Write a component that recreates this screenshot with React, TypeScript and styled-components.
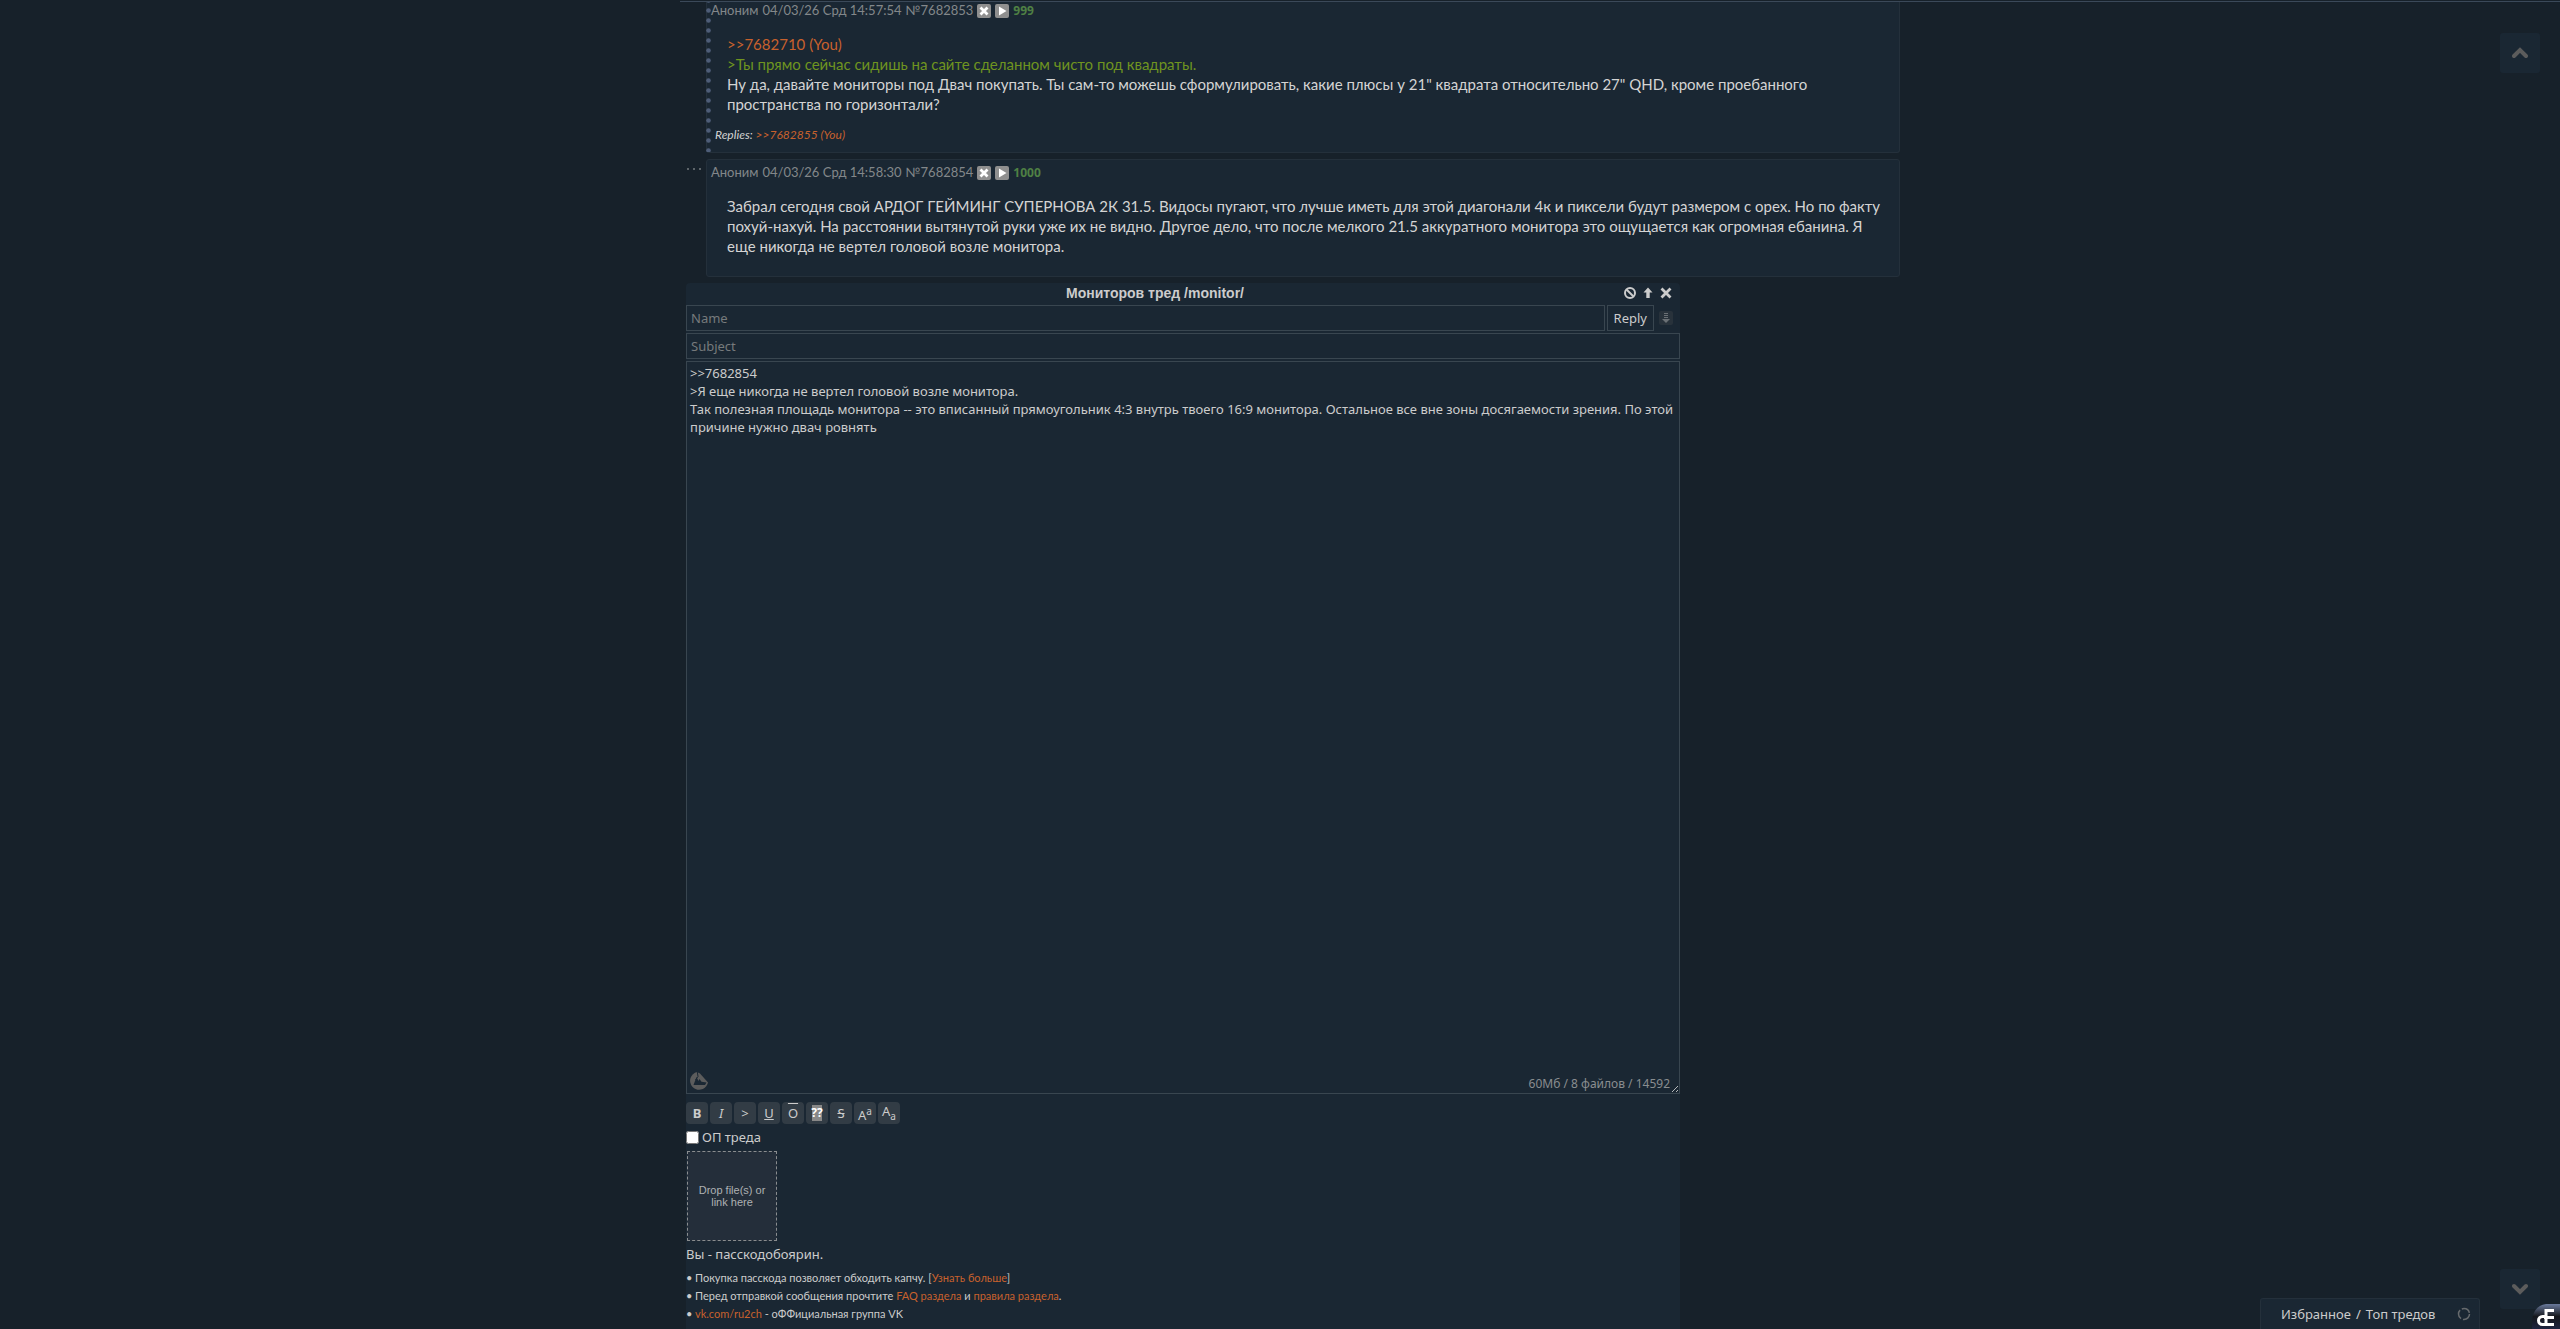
import React from 'react';
import styled, { createGlobalStyle, css } from 'styled-components';

const c = {
  page: '#17212a',
  panel: '#1a2733',
  edge: '#24303b',
  field: '#394650',
  line: '#3b4959',
  text: '#cccccc',
  post: '#d4d4d4',
  muted: '#83878a',
  link: '#c8612d',
  quote: '#6f9420',
  count: '#4f8044',
};
const postFont = 'Lato, "Noto Sans", sans-serif';
const formFont = '"Noto Sans", "Open Sans", sans-serif';
const arial = '"Liberation Sans", Arial, sans-serif';

const GlobalStyle = createGlobalStyle`
  *, *::before, *::after { box-sizing: border-box; }
  body { margin: 0; background: ${c.page}; color: ${c.text}; font-family: ${postFont}; overflow: hidden; }
  button, input, textarea { font: inherit; color: inherit; margin: 0; }
  button { cursor: pointer; }
`;

const Page = styled.main`
  display: flex;
  flex-direction: column;
  height: 100vh;
  margin-left: max(0px, calc(50% - 600px));
`;

const TopLine = styled.div`
  flex: none;
  height: 2px;
  border-bottom: 1px solid ${c.line};
`;

const Thread = styled.section`
  flex: none;
  display: flex;
  flex-direction: column;
  gap: 6px;
  max-width: 1220px;
`;

const PostRow = styled.div`
  display: grid;
  grid-template-columns: 26px minmax(0, 1fr);
`;

const Hide = styled.button`
  align-self: start;
  padding: 0 5px 0 7px;
  border: 0;
  background: none;
  display: flex;
  height: 20px;
  align-items: center;
`;

const Post = styled.article<{ $cut?: boolean }>`
  position: relative;
  padding: 4px 8px 7px 4px;
  background: ${c.panel};
  border: 1px solid ${c.edge};
  border-radius: 3px;
  ${(p) => p.$cut && css`
    border-top: 0;
    border-radius: 0 0 3px 3px;
    padding-top: 0;
  `}
`;

const MineMark = styled.svg`
  position: absolute;
  top: 0;
  left: -1px;
  width: 5px;
  height: 100%;
`;

const PostHead = styled.header`
  display: flex;
  align-items: center;
  gap: 4px;
  height: 17px;
  font-size: 13px;
  line-height: 17px;
  color: ${c.muted};
`;

const HeadButton = styled.button`
  display: flex;
  padding: 0;
  border: 0;
  background: none;
`;

const PostCount = styled.span`
  color: ${c.count};
  font: bold 12px/16px ${formFont};
`;

const Message = styled.p`
  margin: 15px 0 13px 16px;
  color: ${c.post};
  font-size: 15px;
  line-height: 20px;
`;

const Link = styled.a`
  color: ${c.link};
  text-decoration: none;
`;

const Quote = styled.span`
  color: ${c.quote};
`;

const Replies = styled.div`
  margin-left: 4px;
  padding-bottom: 2px;
  color: ${c.post};
  font-size: 12px;
  line-height: 16px;
  font-style: italic;
`;

const Form = styled.form`
  flex: 1 0 auto;
  display: flex;
  flex-direction: column;
  max-width: 994px;
  width: 100%;
  margin: 6px 0 0 6px;
  background: ${c.panel};
  border-radius: 4px 4px 0 0;
  font: 13px/18px ${formFont};
`;

const TitleBar = styled.div`
  display: grid;
  grid-template-columns: 1fr 56px;
  align-items: center;
  height: 22px;
`;

const Title = styled.h2`
  margin: 0;
  padding-bottom: 2px;
  text-align: center;
  font: bold 14px/16px ${arial};
`;

const WindowButtons = styled.div`
  display: flex;
  justify-content: flex-end;
  gap: 4px;
  padding: 0 7px 2px 0;
`;

const IconButton = styled.button`
  display: flex;
  padding: 0;
  border: 0;
  background: none;
`;

const Fields = styled.div`
  display: flex;
  flex-direction: column;
  gap: 2px;
`;

const FieldRow = styled.div`
  display: flex;
  align-items: center;
  gap: 2px;
  padding-right: 7px;
`;

const Field = styled.input`
  flex: 1;
  min-width: 0;
  width: 100%;
  min-height: 26px;
  padding: 0 4px;
  background: transparent;
  border: 1px solid ${c.field};
  border-radius: 0;
  outline: 0;
  &::placeholder { color: #767a7c; opacity: 1; }
`;

const Submit = styled.button`
  height: 26px;
  padding: 0 6px;
  background: transparent;
  border: 1px solid ${c.field};
  margin-right: 3px;
`;

const Editor = styled.div`
  position: relative;
  display: flex;
`;

const Comment = styled.textarea`
  width: 100%;
  height: 733px;
  padding: 2px 2px 2px 3px;
  background: transparent;
  border: 1px solid ${c.field};
  outline: 0;
  resize: none;
  overflow: hidden;
`;

const Drive = styled.button`
  position: absolute;
  left: 4px;
  bottom: 4px;
  display: flex;
  padding: 0;
  border: 0;
  background: none;
`;

const Limits = styled.span`
  position: absolute;
  right: 10px;
  bottom: 1px;
  font-size: 12px;
  color: #898d90;
`;

const Grip = styled.svg`
  position: absolute;
  right: 1px;
  bottom: 1px;
`;

const Toolbar = styled.div`
  display: flex;
  gap: 2px;
  padding-top: 8px;
`;

const Tool = styled.button`
  display: flex;
  align-items: center;
  justify-content: center;
  width: 22px;
  height: 22px;
  padding: 0;
  border: 0;
  border-radius: 4px;
  background: #323c45;
  line-height: 16px;
  sup, sub { font-size: 10px; }
`;

const Overline = styled.span`
  text-decoration: overline;
`;

const Spoiler = styled.span`
  background: #888;
  color: #fff;
  font-weight: bold;
  font-size: 12px;
  line-height: 16px;
  width: 10px;
  display: flex;
  justify-content: center;
`;

const OpLabel = styled.label`
  display: flex;
  align-items: center;
  gap: 3px;
  height: 26px;
  input { width: 13px; height: 13px; }
`;

const Drop = styled.button`
  width: 90px;
  height: 90px;
  margin: 1px 0 0 1px;
  padding: 0 8px;
  border: 1px dashed #8a8d8f;
  background: #242e3a;
  color: #aeb1b3;
  font: 11px/12px ${arial};
`;

const Passcode = styled.div`
  margin-top: 4px;
`;

const Rules = styled.ul`
  list-style: none;
  margin: 6px 0 0;
  padding: 0;
  font: 11px/18px ${postFont};
  li::before { content: '•'; display: inline-block; width: 9px; }
`;

const Scroll = styled.button<{ $at: 'top' | 'bottom' }>`
  position: fixed;
  right: 20px;
  ${(p) => (p.$at === 'top' ? 'top: 33px;' : 'bottom: 20px;')}
  width: 40px;
  height: 40px;
  display: flex;
  align-items: center;
  justify-content: center;
  padding: 0;
  border: 0;
  border-radius: 3px;
  background: ${c.panel};
`;

const Favorites = styled.aside`
  position: fixed;
  right: 80px;
  bottom: 0;
  display: flex;
  align-items: center;
  justify-content: space-between;
  width: 220px;
  height: 31px;
  padding: 0 8px 0 20px;
  background: ${c.panel};
  border: 1px solid ${c.edge};
  border-bottom: 0;
  border-radius: 3px 3px 0 0;
  font: 13px/18px ${formFont};
`;

const FavList = styled.span`
  display: flex;
  gap: 5px;
`;

const FavLink = styled.a`
  color: inherit;
  text-decoration: none;
`;

const Extension = styled.button`
  position: fixed;
  right: 0;
  bottom: 0;
  display: flex;
  padding: 0;
  border: 0;
  background: none;
`;

const HeadIcons = () => (
  <>
    <HeadButton type="button" aria-label="Hide">
      <svg width="14" height="14" viewBox="0 0 14 14">
        <rect width="14" height="14" rx="2" fill="#8f8f8f" />
        <path d="M3.500 3.500l7 7M10.500 3.500l-7 7" stroke="#fff" strokeWidth="2.800" />
      </svg>
    </HeadButton>
    <HeadButton type="button" aria-label="Reply">
      <svg width="14" height="14" viewBox="0 0 14 14">
        <rect width="14" height="14" rx="2" fill="#8f8f8f" />
        <path d="M4 2.500v9l7.500-4.500z" fill="#fff" />
      </svg>
    </HeadButton>
  </>
);

const tools: [string, React.ReactNode][] = [
  ['Bold', <b>B</b>],
  ['Italic', <i>I</i>],
  ['Quote', <span>&gt;</span>],
  ['Underline', <u>U</u>],
  ['Overline', <Overline>O</Overline>],
  ['Spoiler', <Spoiler>??</Spoiler>],
  ['Strike', <s>S</s>],
  ['Superscript', <span>A<sup>a</sup></span>],
  ['Subscript', <span>A<sub>a</sub></span>],
];

const draft = `>>7682854
>Я еще никогда не вертел головой возле монитора.
Так полезная площадь монитора -- это вписанный прямоугольник 4:3 внутрь твоего 16:9 монитора. Остальное все вне зоны досягаемости зрения. По этой причине нужно двач ровнять`;

export default function App() {
  return (
    <>
      <GlobalStyle />
      <Page>
        <TopLine />
        <Thread>
          <PostRow>
            <span />
            <Post $cut>
              <MineMark aria-hidden="true">
                <defs>
                  <pattern id="dots" width="5" height="10" y="6" patternUnits="userSpaceOnUse">
                    <circle cx="2.500" cy="2.500" r="2.300" fill="#4e5d78" />
                  </pattern>
                </defs>
                <rect width="5" height="100%" fill="url(#dots)" />
              </MineMark>
              <PostHead>
                <span>Аноним</span>
                <span>04/03/26 Срд 14:57:54</span>
                <span>№7682853</span>
                <HeadIcons />
                <PostCount>999</PostCount>
              </PostHead>
              <Message>
                <Link href="#7682710">&gt;&gt;7682710 (You)</Link>
                <br />
                <Quote>&gt;Ты прямо сейчас сидишь на сайте сделанном чисто под квадраты.</Quote>
                <br />
                Ну да, давайте мониторы под Двач покупать. Ты сам-то можешь сформулировать, какие плюсы у 21"
                квадрата относительно 27" QHD, кроме проебанного пространства по горизонтали?
              </Message>
              <Replies>
                Replies: <Link href="#7682855">&gt;&gt;7682855 (You)</Link>
              </Replies>
            </Post>
          </PostRow>
          <PostRow>
            <Hide type="button" aria-label="Post menu">
              <svg width="14" height="4" viewBox="0 0 14 4" fill="#5d6469">
                <rect x="0" y="1" width="2" height="2" />
                <rect x="6" y="1" width="2" height="2" />
                <rect x="12" y="1" width="2" height="2" />
              </svg>
            </Hide>
            <Post>
              <PostHead>
                <span>Аноним</span>
                <span>04/03/26 Срд 14:58:30</span>
                <span>№7682854</span>
                <HeadIcons />
                <PostCount>1000</PostCount>
              </PostHead>
              <Message>
                Забрал сегодня свой АРДОГ ГЕЙМИНГ СУПЕРНОВА 2К 31.5. Видосы пугают, что лучше иметь для этой
                диагонали 4к и пиксели будут размером с орех. Но по факту похуй-нахуй. На расстоянии вытянутой
                руки уже их не видно. Другое дело, что после мелкого 21.5 аккуратного монитора это ощущается как
                огромная ебанина. Я еще никогда не вертел головой возле монитора.
              </Message>
            </Post>
          </PostRow>
        </Thread>

        <Form onSubmit={(e) => e.preventDefault()}>
          <TitleBar>
            <Title>Мониторов тред /monitor/</Title>
            <WindowButtons>
              <IconButton type="button" aria-label="Clear">
                <svg width="14" height="14" viewBox="0 0 14 14" fill="none" stroke="#ccc" strokeWidth="2">
                  <circle cx="7" cy="7" r="5" />
                  <path d="M3.500 3.500l7 7" />
                </svg>
              </IconButton>
              <IconButton type="button" aria-label="Undock">
                <svg width="14" height="14" viewBox="0 0 14 14" fill="#ccc">
                  <path d="M7 1.500l4.500 5H8.700V12H5.300V6.500H2.500z" />
                </svg>
              </IconButton>
              <IconButton type="button" aria-label="Close">
                <svg width="14" height="14" viewBox="0 0 14 14" stroke="#ccc" strokeWidth="2.800">
                  <path d="M2.500 2.500l9 9M11.500 2.500l-9 9" />
                </svg>
              </IconButton>
            </WindowButtons>
          </TitleBar>
          <Fields>
            <FieldRow>
              <Field placeholder="Name" aria-label="Name" />
              <Submit type="submit">Reply</Submit>
              <IconButton type="button" aria-label="Sage">
                <svg width="14" height="14" viewBox="0 0 14 14">
                  <rect width="14" height="14" rx="2" fill="#28323b" />
                  <path d="M5 2.500h4M5 4.500h4M5 6.500h4" stroke="#6a7075" />
                  <path d="M3 8h8l-4 4z" fill="#6a7075" />
                </svg>
              </IconButton>
            </FieldRow>
            <Field placeholder="Subject" aria-label="Subject" />
            <Editor>
              <Comment aria-label="Comment" defaultValue={draft} spellCheck={false} />
              <Drive type="button" aria-label="Attach from drive">
                <svg width="18" height="18" viewBox="0 0 18 18">
                  <path d="M7 0A9 9 0 1 0 17.500 12L18 10.500 10 1.500z" fill="#5c5c5c" />
                  <path d="M6.500 5L3.500 13H15l1.500-2.500-5-.8L9.500 7 8.500 9z" fill={c.panel} />
                  <path d="M7.300 0L8 4.500 5.500 8" fill="none" stroke={c.panel} />
                </svg>
              </Drive>
              <Limits>60Мб / 8 файлов / 14592</Limits>
              <Grip width="8" height="8" viewBox="0 0 8 8" stroke="#b5b8ba" aria-hidden="true">
                <path d="M1 7l6-6M5 7l2-2" />
              </Grip>
            </Editor>
          </Fields>
          <Toolbar>
            {tools.map(([name, glyph]) => (
              <Tool key={name} type="button" title={name}>{glyph}</Tool>
            ))}
          </Toolbar>
          <OpLabel>
            <input type="checkbox" />
            ОП треда
          </OpLabel>
          <Drop type="button">Drop file(s) or link here</Drop>
          <Passcode>Вы - пасскодобоярин.</Passcode>
          <Rules>
            <li>Покупка пасскода позволяет обходить капчу. [<Link href="#market">Узнать больше</Link>]</li>
            <li>
              Перед отправкой сообщения прочтите <Link href="#faq">FAQ раздела</Link> и{' '}
              <Link href="#rules">правила раздела</Link>.
            </li>
            <li><Link href="#vk">vk.com/ru2ch</Link> - оФФициальная группа VK</li>
          </Rules>
        </Form>
      </Page>

      <Scroll $at="top" type="button" aria-label="Up">
        <svg width="16" height="12" viewBox="0 0 16 12" fill="none" stroke="#5c5c5c" strokeWidth="4" strokeLinecap="round">
          <path d="M2 9l6-6 6 6" />
        </svg>
      </Scroll>
      <Scroll $at="bottom" type="button" aria-label="Down">
        <svg width="16" height="12" viewBox="0 0 16 12" fill="none" stroke="#5c5c5c" strokeWidth="4" strokeLinecap="round">
          <path d="M2 3l6 6 6-6" />
        </svg>
      </Scroll>
      <Favorites>
        <FavList>
          <FavLink href="#favorites">Избранное</FavLink>
          <span>/</span>
          <FavLink href="#top">Топ тредов</FavLink>
        </FavList>
        <IconButton type="button" aria-label="Refresh">
          <svg width="14" height="14" viewBox="0 0 14 14" fill="none" stroke="#666a6d" strokeWidth="1.500">
            <circle cx="7" cy="7" r="5.500" strokeDasharray="9.500 2" />
          </svg>
        </IconButton>
      </Favorites>
      <Extension type="button" aria-label="Extension settings">
        <svg width="28" height="25" viewBox="0 0 28 25">
          <defs>
            <linearGradient id="ext" x1="0" y1="0" x2="0" y2="1">
              <stop offset="0" stopColor="#6a7a9c" />
              <stop offset=".5" stopColor="#15171c" />
              <stop offset="1" stopColor="#1d2440" />
            </linearGradient>
          </defs>
          <path d="M28 0H14Q0 2 0 20v5h28z" fill="url(#ext)" />
          <path d="M14 5v17M14 6.500h8M12 13.500h10M12 20.500h10" stroke="#fff" strokeWidth="3" fill="none" />
          <path d="M14 12.500h-3.500a4 4 0 0 0 0 8H14" stroke="#fff" strokeWidth="3" fill="none" />
        </svg>
      </Extension>
    </>
  );
}
